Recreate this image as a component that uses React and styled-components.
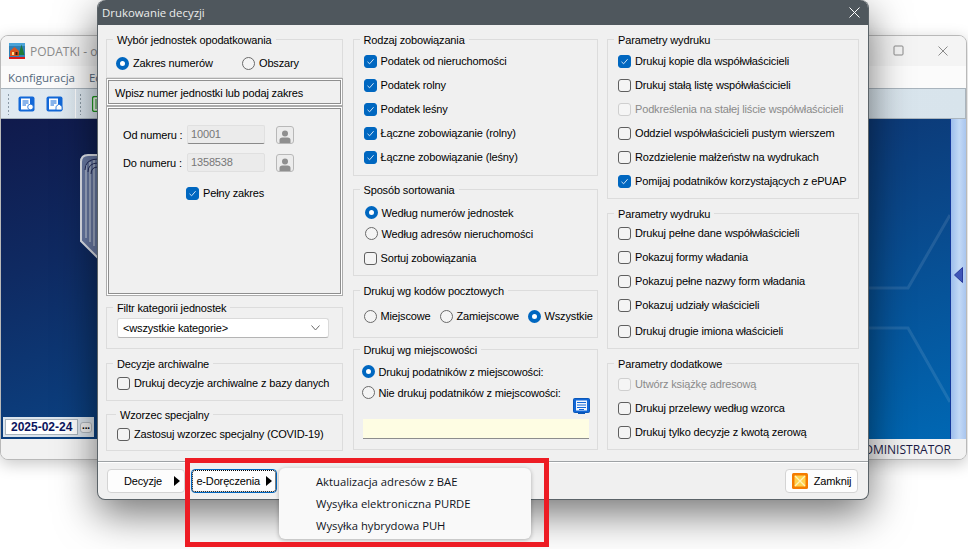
import styled, { createGlobalStyle } from 'styled-components';

const GlobalStyle = createGlobalStyle`
    html, body {
        margin: 0;
        padding: 0;
        background: #fff;
    }
    * {
        box-sizing: border-box;
    }
`;

const Page = styled.div`
    position: relative;
    width: 968px;
    height: 549px;
    overflow: hidden;
    background: #fff;
    font-family: "Liberation Sans", Arial, sans-serif;
    font-size: 11px;
    letter-spacing: -.15px;
    color: #000;
`;

/* okno w tle */
const BackWindow = styled.div`
    position: absolute;
    left: 0;
    top: 35px;
    width: 967px;
    height: 425px;
    display: flex;
    flex-direction: column;
    background: #f3f3f3;
    border: 1px solid #b9b9b9;
    border-radius: 8px;
    overflow: hidden;
    box-shadow: 0 4px 16px rgba(0,0,0,.22);
`;

const BackTitle = styled.div`
    height: 30px;
    display: flex;
    align-items: center;
    gap: 5px;
    padding-left: 8px;
    font-family: "Open Sans", sans-serif;
    font-size: 12px;
    letter-spacing: 0;
    color: #8b8b8b;
    background: #f4f4f4;
`;

const WindowControls = styled.div`
    margin-left: auto;
    display: flex;
    align-items: center;
    gap: 32px;
    padding-right: 18px;
`;

const BackMenu = styled.div`
    height: 22px;
    display: flex;
    align-items: center;
    gap: 14px;
    padding-left: 7px;
    background: #fbfbfb;
    font-family: "Open Sans", sans-serif;
    font-size: 11.5px;
    letter-spacing: 0;
    color: #53687c;
`;

const Toolbar = styled.div`
    height: 31px;
    display: flex;
    align-items: center;
    padding-left: 6px;
    border: 1px solid #a9b4bd;
    border-width: 1px 1px 1px 0;
    background: linear-gradient(90deg, #dfe9f1, #d8e4ec);
`;

const Grip = styled.span`
    width: 3px;
    height: 22px;
    margin-right: ${({$mr}) => $mr || 10}px;
    background: radial-gradient(circle, #8b99a5 1px, transparent 1px) 0 0 / 3px 4px;
`;

const ToolbarDivider = styled.span`
    width: 1px;
    height: 29px;
    margin: 0 3px 0 12px;
    background: #fff;
`;

const Canvas = styled.div`
    position: relative;
    flex: 1;
    display: flex;
    justify-content: flex-end;
    overflow: hidden;
    background: linear-gradient(162deg, #101a4c 0%, #0f2a62 25%, #0a4688 60%, #0068b4 100%);
`;

const CanvasArt = styled.svg`
    position: absolute;
    left: -1px;
    top: -119px;
    width: 968px;
    height: 549px;
`;

const SideStrip = styled.div`
    position: relative;
    width: 16px;
    display: flex;
    align-items: center;
    justify-content: center;
    padding-bottom: 8px;
    border-left: 1px solid #14389c;
    background: linear-gradient(90deg, #9dbdec, #c3d9f6 55%, #a9c5ee);
`;

const DateBar = styled.div`
    position: absolute;
    left: 2px;
    bottom: 2px;
    width: 91px;
    height: 20px;
    display: flex;
    align-items: center;
    padding: 0 2px;
    gap: 2px;
    background: #dbe4ec;
`;

const DateValue = styled.div`
    width: 73px;
    height: 16px;
    line-height: 15px;
    padding-left: 5px;
    background: #fff;
    border: 1px solid #a9b4bd;
    font-weight: 700;
    font-size: 12px;
    letter-spacing: 0;
    white-space: nowrap;
    color: #0b1560;
`;

const DateDots = styled.div`
    width: 12px;
    height: 11px;
    line-height: 6px;
    text-align: center;
    font-size: 10px;
    font-weight: 700;
    background: #f3f3f3;
    border: 1px solid #b5bcc2;
    border-radius: 3px;
`;

const StatusBar = styled.div`
    height: 20px;
    display: flex;
    align-items: center;
    justify-content: flex-end;
    padding-right: 15px;
    background: #f2f2f2;
    font-family: "Open Sans", sans-serif;
    font-size: 12px;
    letter-spacing: 0;
    color: #1b1b44;
`;

/* okno dialogowe */
const Dialog = styled.div`
    position: absolute;
    left: 97px;
    top: 0;
    width: 772px;
    height: 500px;
    display: flex;
    flex-direction: column;
    background: #f0f0f0;
    border: 1px solid #5b6368;
    border-top: none;
    border-radius: 8px;
    box-shadow: 0 14px 40px rgba(0,0,0,.55);
`;

const TitleBar = styled.div`
    height: 25px;
    display: flex;
    align-items: center;
    justify-content: space-between;
    padding: 0 8px 0 4px;
    background: #4f575d;
    border-radius: 8px 8px 0 0;
    font-family: "Open Sans", sans-serif;
    font-size: 11.4px;
    letter-spacing: 0;
    color: #ececec;
`;

const Columns = styled.div`
    flex: 1;
    display: grid;
    grid-template-columns: 237px 245px 252px;
    column-gap: 9.5px;
    padding: 14px 0 0 8px;
`;

const Column = styled.div`
    display: flex;
    flex-direction: column;
`;

const Group = styled.div`
    position: relative;
    height: ${({$h}) => $h}px;
    margin-top: ${({$mt}) => $mt || 0}px;
    padding: ${({$pt}) => $pt || 9}px 0 0 ${({$pl}) => $pl || 10}px;
    border: 1px solid #dcdcdc;
`;

const Legend = styled.span`
    position: absolute;
    left: ${({$l}) => $l || 6}px;
    top: -7px;
    padding: 0 4px;
    background: #f0f0f0;
    line-height: 14px;
    white-space: nowrap;
`;

const Row = styled.label`
    display: flex;
    align-items: center;
    height: ${({$h}) => $h || 24}px;
    margin-top: ${({$mt}) => $mt || 0}px;
    margin-left: ${({$ml}) => $ml || 0}px;
    width: ${({$w}) => ($w ? `${$w}px` : 'auto')};
    flex: none;
    gap: 4px;
    white-space: nowrap;
    color: ${({$disabled}) => ($disabled ? '#8a8a8a' : '#000')};
`;

const OptionRow = styled.div`
    display: flex;
`;

const CheckBox = styled.span`
    width: 13px;
    height: 13px;
    flex: none;
    display: flex;
    align-items: center;
    justify-content: center;
    border-radius: 3px;
    border: 1px solid ${({$checked, $disabled}) => ($checked ? '#0067c0' : $disabled ? '#cfcfcf' : '#5f5f5f')};
    background: ${({$checked, $disabled}) => ($checked ? '#0067c0' : $disabled ? '#f5f5f5' : '#f4f4f4')};
`;

const RadioDot = styled.span`
    width: 13px;
    height: 13px;
    flex: none;
    border-radius: 50%;
    border: ${({$checked}) => ($checked ? '4px solid #0067c0' : '1px solid #6a6a6a')};
    background: ${({$checked}) => ($checked ? '#fff' : '#f4f4f4')};
`;

const Panel = styled.div`
    height: ${({$h}) => $h}px;
    margin-top: ${({$mt}) => $mt || 0}px;
    padding: ${({$pad}) => $pad};
    line-height: ${({$lh}) => ($lh ? `${$lh}px` : 'normal')};
    border: 1px solid #acacac;
    box-shadow: inset 0 0 0 1px #fff, inset 0 0 0 2px #8e8e8e;
`;

const RangeRow = styled.div`
    display: flex;
    align-items: center;
    height: 19px;
    margin-bottom: 9px;
`;

const RangeLabel = styled.span`
    width: 64px;
    flex: none;
    white-space: nowrap;
`;

const RangeInput = styled.div`
    width: 78px;
    height: 19px;
    line-height: 17px;
    padding-left: 3px;
    background: #ebebeb;
    border: 1px solid #e0e0e0;
    border-bottom-color: ${({$line}) => ($line ? '#8a8a8a' : '#e0e0e0')};
    border-radius: 2px;
    color: #777;
`;

const PersonButton = styled.div`
    width: 18px;
    height: 18px;
    margin-left: 11px;
    display: flex;
    align-items: flex-end;
    justify-content: center;
    background: #ececec;
    border: 1px solid #b8b8b8;
    border-radius: 3px;
`;

const Select = styled.div`
    width: 212px;
    height: 20px;
    display: flex;
    align-items: center;
    justify-content: space-between;
    padding: 0 8px 0 5px;
    background: #fff;
    border: 1px solid #dadada;
    border-bottom-color: #b4b4b4;
    border-radius: 3px;
`;

const IconSlot = styled.div`
    width: 228px;
    height: 16px;
    margin-top: -5px;
    display: flex;
    justify-content: flex-end;
`;

const YellowInput = styled.div`
    width: 226px;
    height: 20px;
    margin: 5px 0 0 1px;
    background: #fefde3;
    border-bottom: 1px solid #8d8d8d;
`;

const Footer = styled.div`
    position: relative;
    height: 38px;
    flex: none;
    display: flex;
    gap: 6px;
    padding: 7px 10px 0 9px;
    border-top: 1px solid #9ea2a5;
    box-shadow: inset 0 1px 0 #fff;
`;

const Button = styled.div`
    width: ${({$w}) => $w}px;
    height: 24px;
    display: flex;
    align-items: center;
    justify-content: ${({$end}) => ($end ? 'flex-end' : 'center')};
    gap: ${({$gap}) => $gap || 6}px;
    padding-right: ${({$end}) => ($end ? '4px' : '0')};
    margin-left: ${({$right}) => ($right ? 'auto' : '0')};
    background: #fdfdfd;
    border: 1px solid ${({$focus}) => ($focus ? '#0067c0' : '#d4d4d4')};
    border-radius: 4px;
    outline: ${({$focus}) => ($focus ? '1px dotted #000' : 'none')};
    outline-offset: -2px;
`;

const Arrow = styled.span`
    width: 0;
    height: 0;
    border-left: 6px solid #000;
    border-top: 5.5px solid transparent;
    border-bottom: 5.5px solid transparent;
`;

const PopupMenu = styled.div`
    position: absolute;
    left: 181px;
    top: 6px;
    width: 252px;
    height: 71px;
    padding: 3px 0 0 37px;
    background: #f9f9f9;
    border-radius: 6px;
    box-shadow: 0 1px 4px rgba(0,0,0,.28);
    font-family: "Open Sans", sans-serif;
    font-size: 11.25px;
    letter-spacing: 0;
`;

const PopupItem = styled.div`
    height: 22px;
    line-height: 22px;
    color: #10141c;
`;

const RedFrame = styled.div`
    position: absolute;
    left: 185px;
    top: 458px;
    width: 364px;
    height: 89px;
    border: 5px solid #ed1c24;
    pointer-events: none;
`;

const Check = ({checked, disabled, children, ...rest}) => (
    <Row $disabled={disabled} {...rest}>
        <CheckBox $checked={checked} $disabled={disabled}>
            {checked && (
                <svg width="9" height="9" viewBox="0 0 9 9">
                    <path d="M1.5 4.8 L3.6 6.8 L7.6 2.2" fill="none" stroke="#cfe3f7" strokeWidth="1" />
                </svg>
            )}
        </CheckBox>
        {children}
    </Row>
);

const Radio = ({checked, children, ...rest}) => (
    <Row {...rest}>
        <RadioDot $checked={checked} />
        {children}
    </Row>
);

const PersonIcon = () => (
    <svg width="14" height="14" viewBox="0 0 14 14">
        <circle cx="7" cy="4.5" r="3" fill="#8f8f8f" />
        <path d="M1.5 14 V11 Q1.5 8.5 4.5 8.5 H9.5 Q12.5 8.5 12.5 11 V14 Z" fill="#8f8f8f" />
    </svg>
);

const DocIcon = ({variant}) => (
    <svg width="17" height="16" viewBox="0 0 17 16" style={{marginRight: variant === 2 ? 0 : 11}}>
        <rect x=".5" y=".5" width="16" height="15" rx="2" fill="#1268d8" />
        <rect x="3" y="2.5" width="9" height="11" fill="#fff" />
        <path d="M4.5 5 H10.5 M4.5 7 H10.5 M4.5 9 H8" stroke="#1268d8" />
        {variant === 2
            ? <path d="M10 10.5 L13 8 L16 10.5 V14 H10 Z" fill="#fff" stroke="#1268d8" strokeWidth=".8" />
            : <circle cx="12.5" cy="11" r="2.8" fill="#fff" stroke="#1268d8" strokeWidth=".8" />}
    </svg>
);

const GreenIcon = () => (
    <svg width="17" height="16" viewBox="0 0 17 16">
        <rect x=".5" y=".5" width="16" height="15" rx="2" fill="#f4fff2" stroke="#1f9a1f" strokeWidth="1.4" />
        <path d="M4 3 V13 M7 3 V13" stroke="#1f9a1f" />
    </svg>
);

const ListIcon = () => (
    <svg width="17" height="16" viewBox="0 0 17 16">
        <rect x=".5" y=".5" width="16" height="14" rx="1" fill="#1268d8" stroke="#0b57b8" />
        <rect x="3" y="2.5" width="11" height="10" fill="#f2f7fd" />
        <path d="M4 4.5 H13 M4 7 H13 M4 9.5 H13 M6 11.5 H11" stroke="#1268d8" />
        <rect x="5" y="14.5" width="7" height="1.5" fill="#0b57b8" />
    </svg>
);

const CloseIcon = () => (
    <svg width="16" height="16" viewBox="0 0 16 16">
        <rect width="16" height="16" rx="1.5" fill="#f57c00" />
        <rect x="2.5" y="2.5" width="11" height="11" fill="#ffd24d" />
        <path d="M3 3 L13 13 M13 3 L3 13" stroke="#fff3b8" strokeWidth="1.3" />
    </svg>
);

const AppIcon = () => (
    <svg width="16" height="16" viewBox="0 0 16 16">
        <rect width="16" height="16" fill="#2f7fb5" />
        <rect y="0" width="16" height="3" fill="#4aa3d8" />
        <path d="M1 8 L5.5 4 L10 8 V13 H1 Z" fill="#d9541e" />
        <rect x="3" y="9" width="2" height="3" fill="#ffe08a" />
        <rect x="6.5" y="9" width="2" height="3" fill="#3a1a0a" />
        <path d="M12.5 1.5 L15.5 12 H9.5 Z" fill="#1d7a3a" />
        <rect y="14" width="16" height="2" fill="#d91a1a" />
    </svg>
);

const RightGroups = [
    {title: 'Parametry wydruku', h: 160, pt: 9, mt: 0, rows: [
        {label: 'Drukuj kopie dla współwłaścicieli', checked: true},
        {label: 'Drukuj stałą listę współwłaścicieli'},
        {label: 'Podkreślenia na stałej liście współwłaścicieli', disabled: true},
        {label: 'Oddziel współwłaścicieli pustym wierszem'},
        {label: 'Rozdzielenie małżeństw na wydrukach'},
        {label: 'Pomijaj podatników korzystających z ePUAP', checked: true},
    ]},
    {title: 'Parametry wydruku', h: 136, pt: 7, mt: 14, rows: [
        {label: 'Drukuj pełne dane współwłaścicieli'},
        {label: 'Pokazuj formy władania'},
        {label: 'Pokazuj pełne nazwy form władania'},
        {label: 'Pokazuj udziały właścicieli'},
        {label: 'Drukuj drugie imiona właścicieli', mt: 2},
    ]},
    {title: 'Parametry dodatkowe', h: 87, pt: 8, mt: 14, rows: [
        {label: 'Utwórz książkę adresową', disabled: true},
        {label: 'Drukuj przelewy według wzorca'},
        {label: 'Drukuj tylko decyzje z kwotą zerową'},
    ]},
];

const TaxTypes = [
    'Podatek od nieruchomości',
    'Podatek rolny',
    'Podatek leśny',
    'Łączne zobowiązanie (rolny)',
    'Łączne zobowiązanie (leśny)',
];

export default function App() {
    return (
        <Page>
            <GlobalStyle />
            <BackWindow>
                <BackTitle>
                    <AppIcon />
                    PODATKI - os
                    <WindowControls>
                        <svg width="14" height="12" viewBox="0 0 14 12"><rect x="2" y="1" width="9" height="9" rx="1" fill="none" stroke="#8a8a8a" /></svg>
                        <svg width="10" height="10" viewBox="0 0 10 10"><path d="M.5 .5 L9.5 9.5 M9.5 .5 L.5 9.5" stroke="#8a8a8a" /></svg>
                    </WindowControls>
                </BackTitle>
                <BackMenu>
                    <span>Konfiguracja</span>
                    <span>Edycja</span>
                </BackMenu>
                <Toolbar>
                    <Grip $mr={8} />
                    <DocIcon variant={1} />
                    <DocIcon variant={2} />
                    <ToolbarDivider />
                    <Grip />
                    <GreenIcon />
                </Toolbar>
                <Canvas>
                    <CanvasArt viewBox="0 0 968 549">
                        <path d="M100 155 H88 Q81 155 81 162 V241 L100 260 Z" fill="#6a7ba6" stroke="#e4e8f0" strokeWidth="2" />
                        <path d="M86 165 V238 M90 162 V242 M94 160 V246 M98 158 V250" stroke="#b9c4d8" strokeWidth="1.4" />
                        <path d="M85 170 Q85 159 98 159 M88 172 Q88 163 98 163 M91 174 Q91 167 98 167" fill="none" stroke="#232c5c" strokeWidth="1" />
                        <path d="M950 215 L908 288 H860 M860 328 H908 L950 402" fill="none" stroke="#fff" strokeOpacity=".1" strokeWidth="3" />
                    </CanvasArt>
                    <SideStrip>
                        <svg width="9" height="16" viewBox="0 0 9 16"><path d="M8.5 .5 V15.5 L.5 8 Z" fill="#3f55b8" stroke="#27389a" /></svg>
                    </SideStrip>
                    <DateBar>
                        <DateValue>2025-02-24</DateValue>
                        <DateDots>...</DateDots>
                    </DateBar>
                </Canvas>
                <StatusBar>ADMINISTRATOR</StatusBar>
            </BackWindow>

            <Dialog>
                <TitleBar>
                    Drukowanie decyzji
                    <svg width="11" height="11" viewBox="0 0 11 11"><path d="M.5 .5 L10.5 10.5 M10.5 .5 L.5 10.5" stroke="#fff" /></svg>
                </TitleBar>
                <Columns>
                    <Column>
                        <Group $h={39} $pt={11} $pl={9}>
                            <Legend>Wybór jednostek opodatkowania</Legend>
                            <OptionRow>
                                <Radio checked $w={126}>Zakres numerów</Radio>
                                <Radio>Obszary</Radio>
                            </OptionRow>
                        </Group>
                        <Panel $h={28} $lh={28} $pad="0 0 0 8px">
                            Wpisz numer jednostki lub podaj zakres
                        </Panel>
                        <Panel $h={190} $pad="18px 0 0 16px">
                            <RangeRow>
                                <RangeLabel>Od numeru :</RangeLabel>
                                <RangeInput $line>10001</RangeInput>
                                <PersonButton><PersonIcon /></PersonButton>
                            </RangeRow>
                            <RangeRow>
                                <RangeLabel>Do numeru :</RangeLabel>
                                <RangeInput>1358538</RangeInput>
                                <PersonButton><PersonIcon /></PersonButton>
                            </RangeRow>
                            <Check checked $ml={63}>Pełny zakres</Check>
                        </Panel>
                        <Group $h={42} $mt={11} $pt={10}>
                            <Legend>Filtr kategorii jednostek</Legend>
                            <Select>
                                &lt;wszystkie kategorie&gt;
                                <svg width="9" height="6" viewBox="0 0 9 6"><path d="M.5 .5 L4.5 5 L8.5 .5" fill="none" stroke="#6a6a6a" /></svg>
                            </Select>
                        </Group>
                        <Group $h={38} $mt={14} $pt={7}>
                            <Legend>Decyzje archiwalne</Legend>
                            <Check>Drukuj decyzje archiwalne z bazy danych</Check>
                        </Group>
                        <Group $h={37} $mt={13} $pt={7}>
                            <Legend $l={9}>Wzorzec specjalny</Legend>
                            <Check>Zastosuj wzorzec specjalny (COVID-19)</Check>
                        </Group>
                    </Column>

                    <Column>
                        <Group $h={137}>
                            <Legend>Rodzaj zobowiązania</Legend>
                            {TaxTypes.map((label) => <Check checked key={label}>{label}</Check>)}
                        </Group>
                        <Group $h={87} $mt={13} $pt={12} $pl={11}>
                            <Legend>Sposób sortowania</Legend>
                            <Radio checked $h={21}>Według numerów jednostek</Radio>
                            <Radio $h={21}>Według adresów nieruchomości</Radio>
                            <Check $h={28} $ml={-1}>Sortuj zobowiązania</Check>
                        </Group>
                        <Group $h={48} $mt={14} $pt={13}>
                            <Legend>Drukuj wg kodów pocztowych</Legend>
                            <OptionRow>
                                <Radio $w={76}>Miejscowe</Radio>
                                <Radio $w={88}>Zamiejscowe</Radio>
                                <Radio checked>Wszystkie</Radio>
                            </OptionRow>
                        </Group>
                        <Group $h={101} $mt={11} $pt={11} $pl={8}>
                            <Legend>Drukuj wg miejscowości</Legend>
                            <Radio checked $h={21}>Drukuj podatników z miejscowości:</Radio>
                            <Radio $h={21}>Nie drukuj podatników z miejscowości:</Radio>
                            <IconSlot><ListIcon /></IconSlot>
                            <YellowInput />
                        </Group>
                    </Column>

                    <Column>
                        {RightGroups.map((group, i) => (
                            <Group $h={group.h} $mt={group.mt} $pt={group.pt} key={i}>
                                <Legend>{group.title}</Legend>
                                {group.rows.map((row) => (
                                    <Check checked={row.checked} disabled={row.disabled} $mt={row.mt} key={row.label}>
                                        {row.label}
                                    </Check>
                                ))}
                            </Group>
                        ))}
                    </Column>
                </Columns>
                <Footer>
                    <Button $w={78} $end $gap={12}>Decyzje<Arrow /></Button>
                    <Button $w={86} $end $focus>e-Doręczenia<Arrow /></Button>
                    <Button $w={73} $right><CloseIcon />Zamknij</Button>
                    <PopupMenu>
                        <PopupItem>Aktualizacja adresów z BAE</PopupItem>
                        <PopupItem>Wysyłka elektroniczna PURDE</PopupItem>
                        <PopupItem>Wysyłka hybrydowa PUH</PopupItem>
                    </PopupMenu>
                </Footer>
            </Dialog>
            <RedFrame />
        </Page>
    );
}
